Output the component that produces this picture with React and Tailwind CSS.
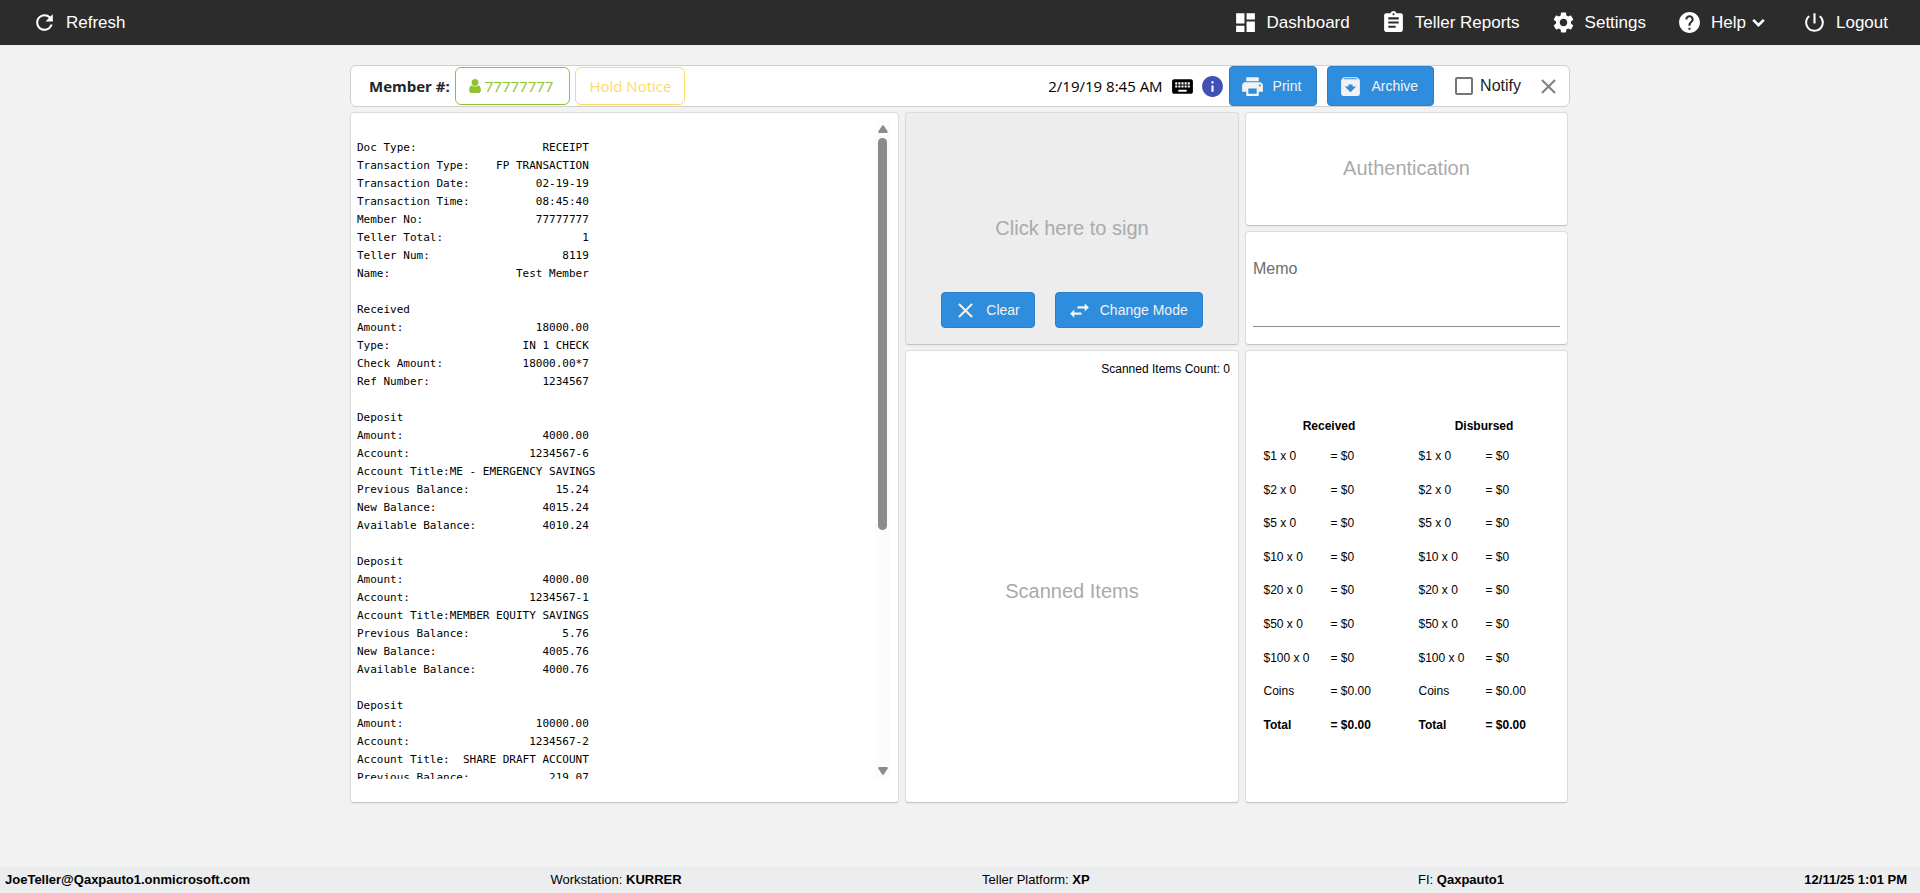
import React, { useState } from 'react';
import {
  MdArchive,
  MdAssignment,
  MdClose,
  MdDashboard,
  MdHelp,
  MdInfo,
  MdKeyboard,
  MdPowerSettingsNew,
  MdPrint,
  MdRefresh,
  MdSettings,
  MdSwapHoriz,
} from 'react-icons/md';

const ICON_SIZE = 25;

// Receipt lines are 35 characters wide: label on the left, value on the right
const RECEIPT_WIDTH = 35;

const RECEIPT = [
  [],
  ['Doc Type:', 'RECEIPT'],
  ['Transaction Type:', 'FP TRANSACTION'],
  ['Transaction Date:', '02-19-19'],
  ['Transaction Time:', '08:45:40'],
  ['Member No:', '77777777'],
  ['Teller Total:', '1'],
  ['Teller Num:', '8119'],
  ['Name:', 'Test Member'],
  [],
  ['Received'],
  ['Amount:', '18000.00'],
  ['Type:', 'IN 1 CHECK'],
  ['Check Amount:', '18000.00*7'],
  ['Ref Number:', '1234567'],
  [],
  ['Deposit'],
  ['Amount:', '4000.00'],
  ['Account:', '1234567-6'],
  ['Account Title:', 'ME - EMERGENCY SAVINGS'],
  ['Previous Balance:', '15.24'],
  ['New Balance:', '4015.24'],
  ['Available Balance:', '4010.24'],
  [],
  ['Deposit'],
  ['Amount:', '4000.00'],
  ['Account:', '1234567-1'],
  ['Account Title:', 'MEMBER EQUITY SAVINGS'],
  ['Previous Balance:', '5.76'],
  ['New Balance:', '4005.76'],
  ['Available Balance:', '4000.76'],
  [],
  ['Deposit'],
  ['Amount:', '10000.00'],
  ['Account:', '1234567-2'],
  ['Account Title:', 'SHARE DRAFT ACCOUNT'],
  ['Previous Balance:', '219.07'],
];

const formatLine = ([label = '', value = '']) =>
  label + value.padStart(RECEIPT_WIDTH - label.length, ' ');

const CASH_ROWS = [
  ['$1 x 0', '= $0'],
  ['$2 x 0', '= $0'],
  ['$5 x 0', '= $0'],
  ['$10 x 0', '= $0'],
  ['$20 x 0', '= $0'],
  ['$50 x 0', '= $0'],
  ['$100 x 0', '= $0'],
  ['Coins', '= $0.00'],
  ['Total', '= $0.00'],
];

const NAV_LINKS = [
  { label: 'Dashboard', Icon: MdDashboard },
  { label: 'Teller Reports', Icon: MdAssignment },
  { label: 'Settings', Icon: MdSettings },
  { label: 'Help', Icon: MdHelp, hasMenu: true },
  { label: 'Logout', Icon: MdPowerSettingsNew },
];

function ChevronIcon() {
  return (
    <svg
      viewBox="0 0 24 24"
      width={ICON_SIZE}
      height={ICON_SIZE}
      fill="none"
      stroke="currentColor"
      strokeWidth="2.6"
      aria-hidden="true"
    >
      <path d="M6.900 9.500L12 14.600l5.100-5.100" />
    </svg>
  );
}

function NavLink({ label, Icon, hasMenu }) {
  return (
    <a href="#" className="flex items-center text-white hover:text-gray-300">
      <Icon size={ICON_SIZE} className="mr-[9px]" />
      {label}
      {hasMenu ? <ChevronIcon /> : null}
    </a>
  );
}

function TopBar() {
  return (
    <header className="flex h-[45px] shrink-0 items-center justify-between bg-[#2c2c2c] px-8 text-[17px]">
      <NavLink label="Refresh" Icon={MdRefresh} />
      <nav className="flex items-center gap-[31px]">
        {NAV_LINKS.map((link) => (
          <NavLink key={link.label} {...link} />
        ))}
      </nav>
    </header>
  );
}

function ActionButton({ Icon, children, className = '' }) {
  return (
    <button
      type="button"
      className={`flex items-center gap-2 rounded border border-[#2a7fc6] bg-[#2f8ddd] text-sm text-[#f2f2f2] hover:bg-[#2a7fc6] ${className}`}
    >
      <Icon size={ICON_SIZE} />
      {children}
    </button>
  );
}

function Card({ children, className = '' }) {
  return (
    <section
      className={`rounded border border-[#dcdcdc] border-b-[#c4c4c4] shadow-xs ${className}`}
    >
      {children}
    </section>
  );
}

function UserIcon() {
  return (
    <svg viewBox="0 128 1280 1536" className="h-[14px] w-3" fill="currentColor" aria-hidden="true">
      <path d="M1280 1399q0 109-62.5 187t-150.5 78h-854q-88 0-150.5-78t-62.5-187q0-85 8.5-160.5t31.5-152 58.5-131 94-89 134.5-34.5q131 128 313 128t313-128q76 0 134.5 34.5t94 89 58.5 131 31.5 152 8.5 160.5zm-256-887q0 159-112.5 271.5t-271.5 112.5-271.5-112.5-112.5-271.5 112.5-271.5 271.5-112.5 271.5 112.5 112.5 271.5z" />
    </svg>
  );
}

function MemberBar() {
  const [notify, setNotify] = useState(false);

  return (
    <div className="flex h-[42px] items-center justify-between rounded-md border border-[#cfcfcf] bg-white pr-2 pl-[18px] font-['Open_Sans','Noto_Sans',sans-serif] text-[15px]">
      <div className="flex items-center gap-[5px]">
        <span className="font-bold text-[#212529]">Member #:</span>
        <button
          type="button"
          className="flex h-[38px] items-center gap-1 rounded-md border border-[#8cc32f] pr-4 pl-[13px] text-[#8cc32f]"
        >
          <UserIcon />
          77777777
        </button>
        <button
          type="button"
          className="h-[38px] rounded-md border border-[#ffd966] px-[13px] text-[#ffd966]"
        >
          Hold Notice
        </button>
      </div>

      <div className="flex items-center">
        <span className="mr-[7px] text-black">2/19/19 8:45 AM</span>
        <MdKeyboard size={ICON_SIZE} className="mr-[5px] text-black" />
        <MdInfo size={ICON_SIZE} className="mr-1 text-[#3f51b5]" />
        <div className="flex gap-[10px] font-['Liberation_Sans',Arial,sans-serif]">
          <ActionButton Icon={MdPrint} className="h-10 pr-[15px] pl-[10px]">
            Print
          </ActionButton>
          <ActionButton Icon={MdArchive} className="h-10 pr-[15px] pl-[10px]">
            Archive
          </ActionButton>
        </div>
        <label className="ml-[21px] flex items-center gap-[7px] font-['Liberation_Sans',Arial,sans-serif] text-base text-[#212121]">
          <input
            type="checkbox"
            checked={notify}
            onChange={(e) => setNotify(e.target.checked)}
            className="h-[18px] w-[18px] appearance-none rounded-xs border-2 border-[#757575] checked:bg-[#2f8ddd]"
          />
          Notify
        </label>
        <button type="button" aria-label="Close" className="ml-[15px] text-[#808080]">
          <MdClose size={ICON_SIZE} />
        </button>
      </div>
    </div>
  );
}

function ScrollRail() {
  return (
    <div className="flex w-[15px] flex-col items-center bg-[#fcfcfc] py-1 text-[#8b8b8b]" aria-hidden="true">
      <svg viewBox="0 0 10 8" className="h-2 w-[10px]" fill="currentColor">
        <path d="M4.2.6Q5-.3 5.8.6L9.7 6.600Q10 8 8.800 8H1.200Q0 8 .3 6.600z" />
      </svg>
      <div className="mt-[5px] h-[392px] w-[9px] rounded-full bg-[#8b8b8b]" />
      <svg viewBox="0 0 10 8" className="mt-auto h-2 w-[10px]" fill="currentColor">
        <path d="M4.2 7.400Q5 8.300 5.800 7.400L9.700 1.400Q10 0 8.800 0H1.200Q0 0 .3 1.400z" />
      </svg>
    </div>
  );
}

function ReceiptCard() {
  return (
    <Card className="row-span-2 bg-white pt-2 pr-2 pb-[23px] pl-[6px]">
      <div className="flex h-[658px]">
        <pre className="flex-1 overflow-y-auto font-['DejaVu_Sans_Mono',monospace] text-[11px] leading-[18px] text-black [scrollbar-width:none]">
          {RECEIPT.map(formatLine).join('\n')}
        </pre>
        <ScrollRail />
      </div>
    </Card>
  );
}

function SignatureCard() {
  return (
    <Card className="flex flex-col items-center justify-end bg-[#ededed] pb-4">
      <p className="mb-12 text-xl leading-8 text-[#aaa]">Click here to sign</p>
      <div className="flex gap-5">
        <ActionButton Icon={MdClose} className="h-9 pr-[14px] pl-[11px]">
          Clear
        </ActionButton>
        <ActionButton Icon={MdSwapHoriz} className="h-9 pr-[14px] pl-[11px]">
          Change Mode
        </ActionButton>
      </div>
    </Card>
  );
}

function ScannedItemsCard() {
  return (
    <Card className="flex flex-col bg-white">
      <p className="mt-2 pr-2 text-right text-xs leading-5 text-black">
        Scanned Items Count: 0
      </p>
      <div className="flex flex-1 items-center justify-center text-xl text-[#aaa]">
        Scanned Items
      </div>
    </Card>
  );
}

function MemoCard() {
  return (
    <Card className="bg-white px-[7px] pt-[25px]">
      <label htmlFor="memo" className="block text-base text-[#6e6e6e]">
        Memo
      </label>
      <textarea
        id="memo"
        className="block h-[46px] w-full resize-none border-b border-[#8c8c8c] text-base text-[#333] outline-none"
      />
    </Card>
  );
}

function CashCard() {
  return (
    <Card className="flex items-center justify-center bg-white">
      <table className="h-[330px] w-[286px] table-fixed text-left text-xs text-black">
        <colgroup>
          <col className="w-[67px]" />
          <col className="w-[88px]" />
          <col className="w-[67px]" />
          <col className="w-16" />
        </colgroup>
        <thead>
          <tr className="h-7">
            <th colSpan={2} className="pr-6 text-center">
              Received
            </th>
            <th colSpan={2} className="text-center">
              Disbursed
            </th>
          </tr>
        </thead>
        <tbody>
          {CASH_ROWS.map(([label, amount]) => (
            <tr key={label} className="last:font-bold">
              <td>{label}</td>
              <td>{amount}</td>
              <td>{label}</td>
              <td>{amount}</td>
            </tr>
          ))}
        </tbody>
      </table>
    </Card>
  );
}

function StatusBar() {
  return (
    <footer className="flex h-[26px] shrink-0 items-center justify-between bg-[#ebedef] pr-[13px] pl-[5px] text-[13px] text-black">
      <b>JoeTeller@Qaxpauto1.onmicrosoft.com</b>
      <span>
        Workstation: <b>KURRER</b>
      </span>
      <span className="pr-7">
        Teller Platform: <b>XP</b>
      </span>
      <span>
        FI: <b>Qaxpauto1</b>
      </span>
      <b>12/11/25 1:01 PM</b>
    </footer>
  );
}

export default function App() {
  return (
    <div className="flex min-h-screen flex-col bg-[#f2f2f2] font-['Liberation_Sans',Arial,sans-serif]">
      <TopBar />
      <main className="mx-auto w-full max-w-[1220px] flex-1 pt-5">
        <MemberBar />
        <div className="mt-[5px] mr-0.5 grid grid-cols-[549fr_334fr_323fr] grid-rows-[233px_1fr] gap-x-[6px] gap-y-[5px]">
          <ReceiptCard />
          <SignatureCard />
          <div className="grid grid-rows-2 gap-[5px]">
            <Card className="flex items-center justify-center bg-white pb-0.5 text-xl text-[#aaa]">
              Authentication
            </Card>
            <MemoCard />
          </div>
          <ScannedItemsCard />
          <CashCard />
        </div>
      </main>
      <StatusBar />
    </div>
  );
}
